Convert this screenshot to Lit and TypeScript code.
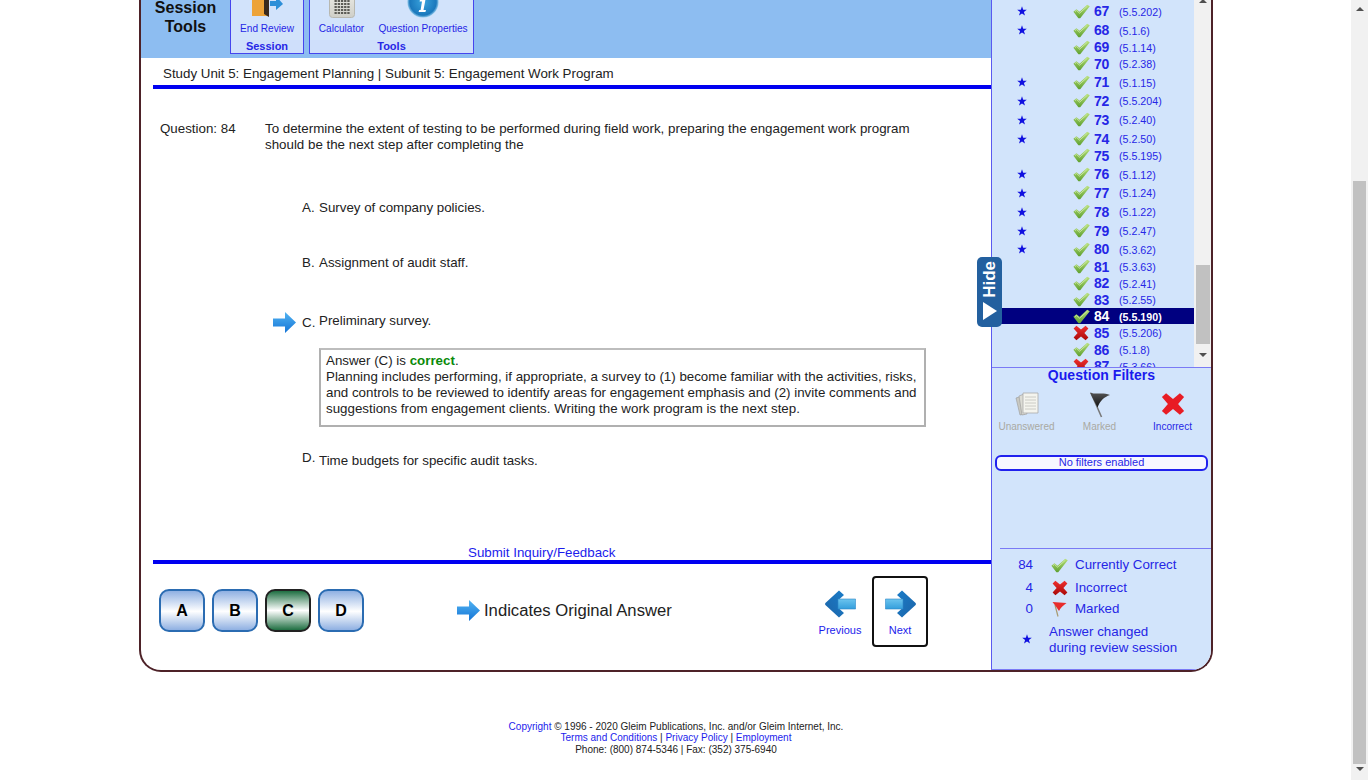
import { LitElement, html, css, svg } from 'lit';
import { customElement } from 'lit/decorators.js';

type Row = { num: number; ref: string; star?: boolean; bad?: boolean; sel?: boolean };

const ROWS: Row[] = [
    { num: 67, ref: '5.5.202', star: true },
    { num: 68, ref: '5.1.6', star: true },
    { num: 69, ref: '5.1.14' },
    { num: 70, ref: '5.2.38' },
    { num: 71, ref: '5.1.15', star: true },
    { num: 72, ref: '5.5.204', star: true },
    { num: 73, ref: '5.2.40', star: true },
    { num: 74, ref: '5.2.50', star: true },
    { num: 75, ref: '5.5.195' },
    { num: 76, ref: '5.1.12', star: true },
    { num: 77, ref: '5.1.24', star: true },
    { num: 78, ref: '5.1.22', star: true },
    { num: 79, ref: '5.2.47', star: true },
    { num: 80, ref: '5.3.62', star: true },
    { num: 81, ref: '5.3.63' },
    { num: 82, ref: '5.2.41' },
    { num: 83, ref: '5.2.55' },
    { num: 84, ref: '5.5.190', sel: true },
    { num: 85, ref: '5.5.206', bad: true },
    { num: 86, ref: '5.1.8' },
    { num: 87, ref: '5.3.66', bad: true },
];

const star = () => html`<svg class="star" width="10" height="10" viewBox="0 0 10 10">
    <path d="M5 .3 6.2 3.7H9.8L6.9 5.9 8 9.5 5 7.4 2 9.5 3.1 5.9.2 3.7H3.8Z" fill="#1010e0"/></svg>`;

const check = () => html`<svg width="17" height="15" viewBox="0 0 17 15">
    <path d="M.4 7.8 3.4 5.2 6.6 7.8 14.2.8 16.8 2.2 7.2 14.2 5.4 14.2Z" fill="url(#chk)"/>
    <path d="M2 7.6 3.5 6.4 6.6 9.2 14.4 2.2" fill="none" stroke="#d4eeb0" stroke-width=".8"/></svg>`;

const cross = (w = 16, fill = 'url(#red)') => html`<svg width=${w} height=${w} viewBox="0 0 16 16">
    <path d="M3.4 .8 8 4.6 12.6.8 15.4 3.4 11.4 8 15.4 12.6 12.6 15.2 8 11.4 3.4 15.2.6 12.6 4.6 8 .6 3.4Z" fill=${fill}/></svg>`;

const bigArrow = (flip = false) => html`<svg width="31" height="28" viewBox="0 0 31 28" class=${flip ? 'flip' : ''}>
    <path d="M17 .6 30.6 13 31 14 30.6 15 17 27.4 12 23 17 18.6V9.4L12 5Z" fill="url(#head)"/>
    <path d="M.4 9H18V19H.4Z" fill="url(#shaft)" stroke="#2f86c8" stroke-width=".6"/></svg>`;

const origArrow = () => html`<svg width="23" height="21" viewBox="0 0 23 21">
    <path d="M0 6.5H12V0L23 10.5 12 21V14.5H0Z" fill="url(#orig)"/></svg>`;

const door = () => html`<svg width="31" height="32" viewBox="0 0 31 32">
    <path d="M0 4H17V30H0Z" fill="#eda338"/>
    <path d="M12 8 17 5V31L12 28Z" fill="#3a2a1c"/>
    <path d="M18 15H24V10L31 18 24 24V20H18Z" fill="#2d8fd8"/></svg>`;

const calc = () => html`<svg width="26" height="32" viewBox="0 0 26 32">
    <rect x=".5" y=".5" width="25" height="31" rx="3" fill="url(#grey)" stroke="#b8b8b0"/>
    <g fill="#5c5c56">${[0, 1, 2, 3, 4, 5, 6, 7].map(r => [0, 1, 2, 3, 4].map(c =>
        svg`<rect x=${5.5 + c * 3.2} y=${5 + r * 3} width="2.3" height="2"/>`))}</g></svg>`;

const info = () => html`<svg width="32" height="32" viewBox="0 0 32 32">
    <circle cx="16" cy="16" r="15.6" fill="url(#info)"/>
    <path d="M13 13.5H18.5L16.5 24H19L18.4 26H11.6L12.2 24H13.6L15 15.6H12.6Z" fill="#fff"/>
    <circle cx="17.6" cy="8.6" r="2.8" fill="#fff"/></svg>`;

const docs = () => html`<svg width="24" height="24" viewBox="0 0 24 24">
    <path d="M1 6 7 4 10 22 5 23Z" fill="#c9c9c2" stroke="#999" stroke-width=".6"/>
    <path d="M4 4 9 2 12 22 7 23Z" fill="#dcdcd5" stroke="#999" stroke-width=".6"/>
    <path d="M8 1H23V21H8Z" fill="#f4f4ee" stroke="#aaa" stroke-width=".8"/>
    <path d="M10 5H21M10 8H21M10 11H21M10 14H21M10 17H21" stroke="#c2c2ba" stroke-width=".8"/></svg>`;

const blackFlag = () => html`<svg width="22" height="26" viewBox="0 0 22 26">
    <path d="M2 1 12.5 25" stroke="#777" stroke-width="1.6"/>
    <path d="M1 .5C7 3 14 0 21 3 15 5 11 9 8.5 15.5 6 10 3 5 1 .5Z" fill="url(#blk)"/></svg>`;

const redFlag = () => html`<svg width="15" height="16" viewBox="0 0 15 16">
    <path d="M3 4 6 15.5" stroke="#a89a70" stroke-width="1.2"/>
    <path d="M.5 1 14.5 2C11 4.5 8.5 7 7 10 5 7 3 4 .5 1Z" fill="#e82c2c"/></svg>`;

@customElement('app-root')
export class AppRoot extends LitElement {
    static styles = css`
        :host {
            display: flex;
            height: 780px;
            overflow: hidden;
            background: #fff;
            color: #222;
            font-family: "Liberation Sans", Arial, sans-serif;
            font-size: 13.33px;
            line-height: 16px;
        }
        .defs { width: 0; height: 0; display: block; }
        svg { display: block; flex: none; }
        .flip { transform: scaleX(-1); }
        .page { flex: 1; min-width: 0; }

        .page-scroll {
            width: 17px;
            background: #f1f1f1;
            display: flex;
            flex-direction: column;
            align-items: center;
        }
        .up { width: 0; height: 0; border: 4px solid transparent; border-top: 0; border-bottom: 4px solid #505050; }
        .down { width: 0; height: 0; border: 4px solid transparent; border-bottom: 0; border-top: 4px solid #505050; }
        .page-scroll .up { margin-top: 7px; }
        .page-thumb { width: 13px; height: 583px; margin-top: 170px; background: #c1c1c1; }
        .page-scroll .down { margin-top: 3px; }

        .frame {
            position: relative;
            display: flex;
            box-sizing: border-box;
            margin-left: 139px;
            width: 1074px;
            height: 672px;
            border: 2px solid #4d2228;
            border-top: 0;
            border-radius: 0 0 22px 22px;
            overflow: hidden;
        }
        .main { width: 850px; display: flex; flex-direction: column; }

        .toolbar {
            height: 58px;
            flex: none;
            background: #8dbdf1;
            display: flex;
            align-items: flex-end;
            overflow: hidden;
            padding-bottom: 4px;
            box-sizing: border-box;
        }
        .tool-title {
            width: 89px;
            align-self: flex-start;
            margin-top: -2px;
            text-align: center;
            font-weight: bold;
            font-size: 16px;
            line-height: 19px;
            color: #111;
        }
        .group {
            margin-right: 5px;
            border: 1px solid #4545ee;
            background: #d2e3fb;
            color: #2626e6;
            display: flex;
            flex-direction: column;
        }
        .group-items { display: flex; }
        .tool {
            display: flex;
            flex-direction: column;
            align-items: center;
            font-size: 10.1px;
            line-height: 14px;
        }
        .tool svg { margin-bottom: 4px; }
        .t-review { width: 72px; }
        .t-calc { width: 63px; }
        .t-props { width: 100px; }
        .group-name {
            height: 13px;
            margin-top: 4px;
            text-align: center;
            font-size: 11px;
            font-weight: bold;
            line-height: 13px;
            background: #cfdffb;
        }

        .subunit {
            height: 27px;
            flex: none;
            padding-left: 22px;
            line-height: 32px;
        }
        .rule { height: 4px; flex: none; margin-left: 12px; background: #0000f0; }

        .question { height: 471px; flex: none; box-sizing: border-box; padding-top: 32px; position: relative; }
        .stem { display: flex; margin-left: 19px; }
        .stem-no { width: 105px; }
        .opt { display: flex; align-items: flex-start; margin-left: 132px; }
        .opt-a { margin-top: 47px; }
        .opt-b { margin-top: 39px; }
        .opt-c { margin-top: 42px; }
        .opt-d { margin-top: 26px; }
        .opt-mark { width: 29px; height: 16px; }
        .opt-mark svg { margin-top: -1px; }
        .opt-letter { width: 17px; }
        .opt-c .opt-letter { margin-top: 2px; }
        .opt-d .opt-letter { margin-top: -3px; }
        .feedback {
            box-sizing: border-box;
            margin: 17px 0 0 178px;
            width: 607px;
            height: 79px;
            padding: 3px 0 0 5px;
            border: 2px solid #b0b0b0;
            border-top-color: #bdbdbd;
        }
        .correct { color: #0a8a0a; font-weight: bold; }
        .inquiry {
            margin-top: 76px;
            margin-left: 327px;
            color: #1c1cec;
            line-height: 16px;
        }

        .answers { flex: 1; display: flex; align-items: flex-start; }
        .choices { display: flex; gap: 7px; margin: 25px 0 0 18px; }
        .choice {
            box-sizing: border-box;
            width: 46px;
            height: 43px;
            border: 2px solid #2b6cb2;
            border-radius: 10px;
            background: linear-gradient(#8fb0e2, #fff 52%, #8fb0e2);
            color: #000;
            font-size: 16px;
            font-weight: bold;
            line-height: 40px;
            text-align: center;
        }
        .choice.on {
            border-color: #222;
            background: linear-gradient(#1f6f42, #fff 50%, #1f6f42);
        }
        .orig {
            display: flex;
            align-items: center;
            gap: 4px;
            margin: 36px 0 0 93px;
            font-size: 16.65px;
            color: #222;
        }
        .nav { display: flex; gap: 4px; margin: 12px 63px 0 auto; }
        .nav-btn {
            box-sizing: border-box;
            width: 56px;
            height: 71px;
            padding-top: 12px;
            border: 2px solid transparent;
            border-radius: 4px;
            display: flex;
            flex-direction: column;
            align-items: center;
            font-size: 11px;
            line-height: 14px;
            color: #1c1cec;
        }
        .nav-btn svg { margin-bottom: 5px; }
        .nav-btn.on { border-color: #111; }

        .side {
            position: relative;
            width: 220px;
            box-sizing: border-box;
            border-left: 1px solid #5a5af0;
            border-bottom: 1px solid #7a7af5;
            background: #d2e4fb;
            color: #2626e6;
        }
        .hide-tab {
            position: absolute;
            left: -15px;
            top: 257px;
            width: 25px;
            height: 70px;
            box-sizing: border-box;
            border-radius: 5px;
            background: #23609f;
            color: #fff;
            display: flex;
            flex-direction: column;
            align-items: center;
            padding-top: 4px;
        }
        .hide-text {
            writing-mode: vertical-rl;
            transform: rotate(180deg);
            font-size: 17px;
            font-weight: bold;
            line-height: 25px;
        }
        .hide-arrow {
            margin-top: 4px;
            width: 0;
            height: 0;
            border-left: 14px solid #fff;
            border-top: 9px solid transparent;
            border-bottom: 9px solid transparent;
        }
        .list-wrap { display: flex; height: 367px; overflow: hidden; }
        .list { flex: 1; padding-top: 1px; min-width: 0; }
        .row {
            display: grid;
            grid-template-columns: 81px 17px 29px auto;
            align-items: center;
            height: 16.6px;
            box-sizing: border-box;
        }
        .row.starred { height: 18.85px; padding-top: 1.7px; }
        .row.sel { background: #000080; color: #fff; }
        .row .star { margin-left: 25px; }
        .row-num { margin-left: 4px; font-size: 14px; font-weight: bold; letter-spacing: -.3px; }
        .row-ref { font-size: 10.67px; padding-top: 1px; }
        .row.sel .row-ref { font-weight: bold; }
        .list-scroll {
            width: 17px;
            flex: none;
            background: #f1f1f1;
            display: flex;
            flex-direction: column;
            align-items: center;
        }
        .list-scroll .up { margin-top: -1px; }
        .list-thumb { width: 14px; height: 79px; margin-top: 262px; background: #c1c1c1; }
        .list-scroll .down { margin-top: 9px; }

        .filters { border-top: 1px solid #7a7af5; }
        .filters-title {
            height: 16px;
            text-align: center;
            font-size: 14px;
            font-weight: bold;
            line-height: 15px;
            color: #1a1aee;
            letter-spacing: .05px;
        }
        .filter-row { display: flex; margin: 8px 0 0 -2px; }
        .filter {
            width: 73px;
            display: flex;
            flex-direction: column;
            align-items: center;
            font-size: 10px;
            line-height: 12px;
        }
        .filter-icon { height: 25px; margin-bottom: 4px; }
        .filter.off { color: #a9a9a2; }
        .no-filters {
            box-sizing: border-box;
            margin: 22px 0 0 3px;
            width: 213px;
            height: 16px;
            border: 2px solid #2020ee;
            border-radius: 6px;
            background: #f7f7ff;
            text-align: center;
            font-size: 11px;
            line-height: 11px;
        }
        .legend { margin: 77px 0 0 8px; border-top: 1px solid #7a7af5; padding-top: 6px; }
        .legend-row {
            display: grid;
            grid-template-columns: 33px 18px 17px auto;
            align-items: center;
            height: 20px;
            line-height: 20px;
        }
        .legend-row.gap { margin-top: 3px; }
        .legend-row.last { margin-top: 1px; }
        .legend-no { grid-column: 1; text-align: right; }
        .legend-icon { grid-column: 3; justify-self: center; }
        .legend-text { margin-left: 7px; }
        .note { display: flex; align-items: center; margin: 5px 0 0 22px; }
        .note .star { margin-top: -2px; }
        .note-text { margin-left: 17px; }

        .footer {
            margin: 48.5px 0 0 139px;
            width: 1074px;
            text-align: center;
            font-size: 10px;
            line-height: 11.5px;
        }
        .link { color: #1c1cec; }
    `;

    renderRow(r: Row) {
        const cls = 'row' + (r.star ? ' starred' : '') + (r.sel ? ' sel' : '');
        return html`<div class=${cls}>
            <span>${r.star ? star() : ''}</span>
            ${r.bad ? cross() : check()}
            <span class="row-num">${r.num}</span>
            <span class="row-ref">(${r.ref})</span>
        </div>`;
    }

    render() {
        return html`
            <svg class="defs">
                <defs>
                    <linearGradient id="chk" x1="0" y1="0" x2="0" y2="1"><stop offset="0" stop-color="#b7e07a"/><stop offset="1" stop-color="#5fa030"/></linearGradient>
                    <linearGradient id="red" x1="0" y1="0" x2="0" y2="1"><stop offset="0" stop-color="#f03030"/><stop offset="1" stop-color="#a80808"/></linearGradient>
                    <linearGradient id="head" x1="0" y1="0" x2="1" y2="1"><stop offset="0" stop-color="#1a7cc8"/><stop offset="1" stop-color="#1c64a8"/></linearGradient>
                    <linearGradient id="shaft" x1="0" y1="0" x2="0" y2="1"><stop offset="0" stop-color="#6cc4ee"/><stop offset="1" stop-color="#339edc"/></linearGradient>
                    <linearGradient id="orig" x1="0" y1="0" x2="0" y2="1"><stop offset="0" stop-color="#52b4f2"/><stop offset="1" stop-color="#1474d6"/></linearGradient>
                    <linearGradient id="grey" x1="0" y1="0" x2="0" y2="1"><stop offset="0" stop-color="#f2f2ec"/><stop offset="1" stop-color="#cfcfc8"/></linearGradient>
                    <radialGradient id="info"><stop offset="0" stop-color="#3aa4de"/><stop offset=".85" stop-color="#1a78bc"/><stop offset="1" stop-color="#8fc8ea"/></radialGradient>
                    <linearGradient id="blk" x1="0" y1="0" x2="0" y2="1"><stop offset="0" stop-color="#555"/><stop offset="1" stop-color="#111"/></linearGradient>
                </defs>
            </svg>
            <div class="page">
                <div class="frame">
                    <div class="main">
                        <div class="toolbar">
                            <div class="tool-title">Session<br>Tools</div>
                            <div class="group">
                                <div class="group-items">
                                    <div class="tool t-review">${door()}End Review</div>
                                </div>
                                <div class="group-name">Session</div>
                            </div>
                            <div class="group">
                                <div class="group-items">
                                    <div class="tool t-calc">${calc()}Calculator</div>
                                    <div class="tool t-props">${info()}Question Properties</div>
                                </div>
                                <div class="group-name">Tools</div>
                            </div>
                        </div>
                        <div class="subunit">Study Unit 5: Engagement Planning | Subunit 5: Engagement Work Program</div>
                        <div class="rule"></div>
                        <div class="question">
                            <div class="stem">
                                <div class="stem-no">Question: 84</div>
                                <div>To determine the extent of testing to be performed during field work, preparing the engagement work program<br>should be the next step after completing the</div>
                            </div>
                            <div class="opt opt-a"><span class="opt-mark"></span><span class="opt-letter">A.</span><span>Survey of company policies.</span></div>
                            <div class="opt opt-b"><span class="opt-mark"></span><span class="opt-letter">B.</span><span>Assignment of audit staff.</span></div>
                            <div class="opt opt-c"><span class="opt-mark">${origArrow()}</span><span class="opt-letter">C.</span><span>Preliminary survey.</span></div>
                            <div class="feedback">Answer (C) is <span class="correct">correct</span>.<br>Planning includes performing, if appropriate, a survey to (1) become familiar with the activities, risks,<br>and controls to be reviewed to identify areas for engagement emphasis and (2) invite comments and<br>suggestions from engagement clients. Writing the work program is the next step.</div>
                            <div class="opt opt-d"><span class="opt-mark"></span><span class="opt-letter">D.</span><span>Time budgets for specific audit tasks.</span></div>
                            <div class="inquiry">Submit Inquiry/Feedback</div>
                        </div>
                        <div class="rule"></div>
                        <div class="answers">
                            <div class="choices">
                                <div class="choice">A</div>
                                <div class="choice">B</div>
                                <div class="choice on">C</div>
                                <div class="choice">D</div>
                            </div>
                            <div class="orig">${origArrow()}<span>Indicates Original Answer</span></div>
                            <div class="nav">
                                <div class="nav-btn">${bigArrow(true)}Previous</div>
                                <div class="nav-btn on">${bigArrow()}Next</div>
                            </div>
                        </div>
                    </div>
                    <div class="side">
                        <div class="list-wrap">
                            <div class="list">${ROWS.map(r => this.renderRow(r))}</div>
                            <div class="list-scroll">
                                <div class="up"></div>
                                <div class="list-thumb"></div>
                                <div class="down"></div>
                            </div>
                        </div>
                        <div class="filters">
                            <div class="filters-title">Question Filters</div>
                            <div class="filter-row">
                                <div class="filter off"><div class="filter-icon">${docs()}</div>Unanswered</div>
                                <div class="filter off"><div class="filter-icon">${blackFlag()}</div>Marked</div>
                                <div class="filter"><div class="filter-icon">${cross(24, '#e81c24')}</div>Incorrect</div>
                            </div>
                            <div class="no-filters">No filters enabled</div>
                        </div>
                        <div class="legend">
                            <div class="legend-row"><span class="legend-no">84</span><span class="legend-icon">${check()}</span><span class="legend-text">Currently Correct</span></div>
                            <div class="legend-row gap"><span class="legend-no">4</span><span class="legend-icon">${cross()}</span><span class="legend-text">Incorrect</span></div>
                            <div class="legend-row last"><span class="legend-no">0</span><span class="legend-icon">${redFlag()}</span><span class="legend-text">Marked</span></div>
                            <div class="note">${star()}<span class="note-text">Answer changed<br>during review session</span></div>
                        </div>
                        <div class="hide-tab"><span class="hide-text">Hide</span><span class="hide-arrow"></span></div>
                    </div>
                </div>
                <div class="footer">
                    <span class="link">Copyright</span> © 1996 - 2020 Gleim Publications, Inc. and/or Gleim Internet, Inc.<br>
                    <span class="link">Terms and Conditions</span> | <span class="link">Privacy Policy</span> | <span class="link">Employment</span><br>
                    Phone: (800) 874-5346 | Fax: (352) 375-6940
                </div>
            </div>
            <div class="page-scroll">
                <div class="up"></div>
                <div class="page-thumb"></div>
                <div class="down"></div>
            </div>
        `;
    }
}
